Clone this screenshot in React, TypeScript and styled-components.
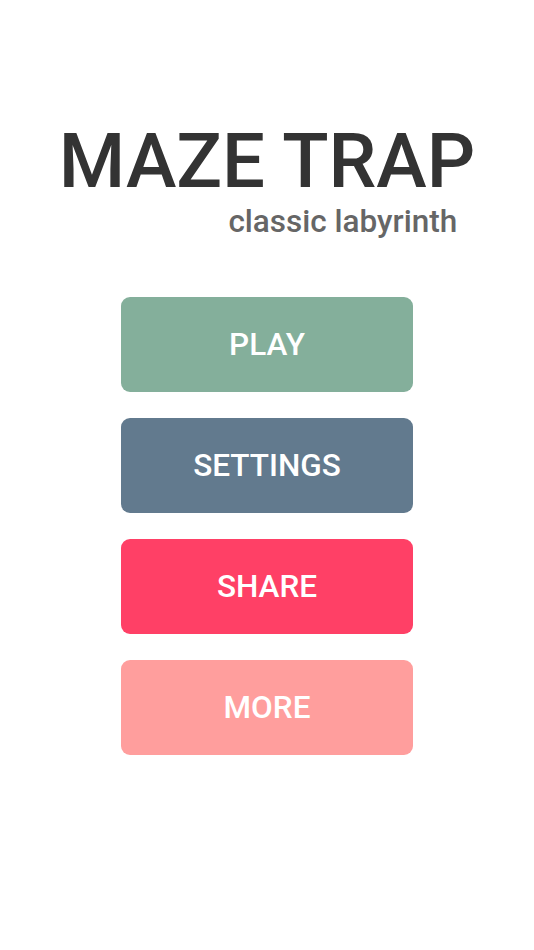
import React from "react";
import styled, { createGlobalStyle } from "styled-components";

const GlobalStyle = createGlobalStyle`
  html, body {
    margin: 0;
    padding: 0;
    background: #ffffff;
    font-family: Roboto, "Liberation Sans", Arial, sans-serif;
  }
`;

const Screen = styled.div`
  width: 534px;
  height: 950px;
  display: flex;
  flex-direction: column;
  align-items: center;
  padding-top: 123px;
  box-sizing: border-box;
`;

const Header = styled.header`
  display: flex;
  flex-direction: column;
  align-items: flex-end;
  gap: 7px;
`;

const Title = styled.h1`
  margin: 0;
  font-family: Roboto, "Liberation Sans", Arial, sans-serif;
  font-size: 76px;
  font-weight: 500;
  line-height: 1;
  color: #333333;
  white-space: nowrap;
`;

const Subtitle = styled.div`
  margin-right: 18px;
  font-size: 31.5px;
  font-weight: 500;
  line-height: 1;
  color: #666666;
`;

const Menu = styled.nav`
  margin-top: 59px;
  display: flex;
  flex-direction: column;
  gap: 26px;
`;

const MenuButton = styled.button<{ $bg: string }>`
  width: 292px;
  height: 95px;
  border: none;
  border-radius: 9px;
  background: ${(p) => p.$bg};
  color: #ffffff;
  font-family: Roboto, "Liberation Sans", Arial, sans-serif;
  font-size: 31.5px;
  font-weight: 500;
  display: flex;
  align-items: center;
  justify-content: center;
  padding: 0;
  cursor: pointer;
`;

const items = [
  { label: "PLAY", bg: "#84af9b" },
  { label: "SETTINGS", bg: "#627a8e" },
  { label: "SHARE", bg: "#ff4066" },
  { label: "MORE", bg: "#ff9e9d" },
];

export default function App() {
  return (
    <>
      <GlobalStyle />
      <Screen>
        <Header>
          <Title>MAZE TRAP</Title>
          <Subtitle>classic labyrinth</Subtitle>
        </Header>
        <Menu>
          {items.map((it) => (
            <MenuButton key={it.label} $bg={it.bg}>
              {it.label}
            </MenuButton>
          ))}
        </Menu>
      </Screen>
    </>
  );
}
